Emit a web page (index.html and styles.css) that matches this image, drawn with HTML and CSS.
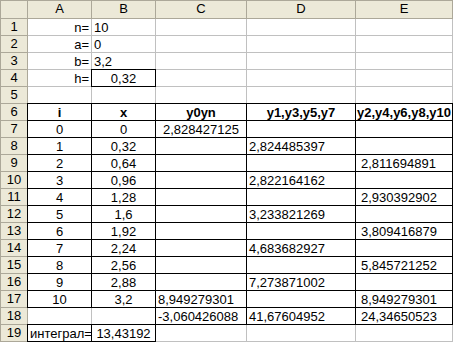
FILE: index.html
```html
<!DOCTYPE html>
<html>
<head>
<meta charset="utf-8">
<link rel="stylesheet" href="styles.css">
</head>
<body>
<div class="sheet">
  <div class="h"></div><div class="h">A</div><div class="h">B</div><div class="h">C</div><div class="h">D</div><div class="h">E</div>

  <div class="h">1</div><div class="c r">n=</div><div class="c l">10</div><div class="c"></div><div class="c"></div><div class="c"></div>
  <div class="h">2</div><div class="c r">a=</div><div class="c l">0</div><div class="c"></div><div class="c"></div><div class="c"></div>
  <div class="h">3</div><div class="c r">b=</div><div class="c l">3,2</div><div class="c"></div><div class="c"></div><div class="c"></div>
  <div class="h">4</div><div class="c r">h=</div><div class="c m b">0,32</div><div class="c"></div><div class="c"></div><div class="c"></div>
  <div class="h">5</div><div class="c"></div><div class="c"></div><div class="c"></div><div class="c"></div><div class="c"></div>

  <div class="h">6</div><div class="c m b bold">i</div><div class="c m b bold">x</div><div class="c m b bold">y0yn</div><div class="c m b bold">y1,y3,y5,y7</div><div class="c m b bold tight">y2,y4,y6,y8,y10</div>
  <div class="h">7</div><div class="c m b">0</div><div class="c m b">0</div><div class="c m b">2,828427125</div><div class="c l b"></div><div class="c e b"></div>
  <div class="h">8</div><div class="c m b">1</div><div class="c m b">0,32</div><div class="c m b"></div><div class="c l b">2,824485397</div><div class="c e b"></div>
  <div class="h">9</div><div class="c m b">2</div><div class="c m b">0,64</div><div class="c m b"></div><div class="c l b"></div><div class="c e b">2,811694891</div>
  <div class="h">10</div><div class="c m b">3</div><div class="c m b">0,96</div><div class="c m b"></div><div class="c l b">2,822164162</div><div class="c e b"></div>
  <div class="h">11</div><div class="c m b">4</div><div class="c m b">1,28</div><div class="c m b"></div><div class="c l b"></div><div class="c e b">2,930392902</div>
  <div class="h">12</div><div class="c m b">5</div><div class="c m b">1,6</div><div class="c m b"></div><div class="c l b">3,233821269</div><div class="c e b"></div>
  <div class="h">13</div><div class="c m b">6</div><div class="c m b">1,92</div><div class="c m b"></div><div class="c l b"></div><div class="c e b">3,809416879</div>
  <div class="h">14</div><div class="c m b">7</div><div class="c m b">2,24</div><div class="c m b"></div><div class="c l b">4,683682927</div><div class="c e b"></div>
  <div class="h">15</div><div class="c m b">8</div><div class="c m b">2,56</div><div class="c m b"></div><div class="c l b"></div><div class="c e b">5,845721252</div>
  <div class="h">16</div><div class="c m b">9</div><div class="c m b">2,88</div><div class="c m b"></div><div class="c l b">7,273871002</div><div class="c e b"></div>
  <div class="h">17</div><div class="c m b">10</div><div class="c m b">3,2</div><div class="c l b">8,949279301</div><div class="c l b"></div><div class="c e b">8,949279301</div>
  <div class="h">18</div><div class="c"></div><div class="c"></div><div class="c l b">-3,060426088</div><div class="c l b">41,67604952</div><div class="c e b">24,34650523</div>
  <div class="h">19</div><div class="c l b">интеграл=</div><div class="c m b">13,43192</div><div class="c"></div><div class="c"></div><div class="c"></div>
</div>
</body>
</html>
```
FILE: styles.css
```css
html, body {
  margin: 0;
  padding: 0;
  background: #ffffff;
}

.sheet {
  display: grid;
  grid-template-columns: 26px 63px 63px 90px 108px 96px;
  grid-template-rows: 17px repeat(19, 16px);
  gap: 1px;
  padding: 1px;
  width: max-content;
  background: #c0c0c0;
  font-family: "Liberation Sans", Arial, sans-serif;
  font-size: 13px;
  color: #000;
}

.h {
  background: #ece9d8;
  outline: 1px solid #aca899;
  z-index: 1;
  text-align: center;
  line-height: 16px;
  white-space: nowrap;
}

.c {
  background: #ffffff;
  line-height: 14px;
  padding: 2px 2px 0 2px;
  white-space: nowrap;
}

.r { text-align: right; }
.l { text-align: left; }
.m { text-align: center; }
.e { text-align: left; padding-left: 5px; }

.b {
  outline: 1px solid #000000;
  z-index: 2;
}

.bold { font-weight: bold; }
.tight { padding-left: 0; padding-right: 0; }
```
